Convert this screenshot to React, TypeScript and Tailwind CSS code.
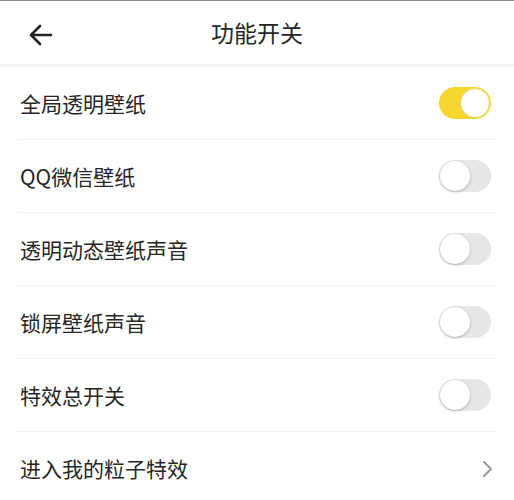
import React, { useState } from 'react';

const font = { fontFamily: '"Noto Sans CJK SC", "Noto Sans", sans-serif' };

const Toggle = ({ on, onChange }: { on: boolean; onChange: () => void }) => (
    <button
        onClick={onChange}
        className={`relative w-[52px] h-[32px] rounded-full ${on ? 'bg-[#f8d630]' : 'bg-[#e6e6e6]'}`}
    >
        <span
            className={`absolute top-[1px] w-[30px] h-[30px] rounded-full bg-white ${on ? 'right-[1px] border border-[#ecd66a]' : 'left-[1px] shadow-[0_1px_3px_rgba(0,0,0,0.25)]'}`}
        />
    </button>
);

export default function App() {
    const [items, setItems] = useState([
        { label: '全局透明壁纸', on: true },
        { label: 'QQ微信壁纸', on: false },
        { label: '透明动态壁纸声音', on: false },
        { label: '锁屏壁纸声音', on: false },
        { label: '特效总开关', on: false },
    ]);

    const toggle = (i: number) =>
        setItems(items.map((it, j) => (j === i ? { ...it, on: !it.on } : it)));

    return (
        <div className="w-[514px] h-[500px] bg-white overflow-hidden text-[#262626]" style={font}>
            <div className="h-[1px] bg-[#8a8a8a]" />
            <div className="relative h-[66px] flex items-center justify-center border-b-[3px] border-[#f4f4f4]">
                <svg className="absolute left-[28px] top-[22px]" width="26" height="24" viewBox="0 0 26 24" fill="none" stroke="#222" strokeWidth="2.6" strokeLinecap="round" strokeLinejoin="round">
                    <path d="M23 12H4M12 3l-9 9 9 9" />
                </svg>
                <span className="text-[23px] leading-none">功能开关</span>
            </div>
            <div className="px-[18px]">
                {items.map((it, i) => (
                    <div key={i} className="h-[73px] flex items-center justify-between border-b border-[#f2f2f2] pl-[2px] pr-[5px]">
                        <span className="text-[21px] leading-none">{it.label}</span>
                        <Toggle on={it.on} onChange={() => toggle(i)} />
                    </div>
                ))}
                <div className="h-[73px] flex items-center justify-between pl-[2px] pr-[5px]">
                    <span className="text-[21px] leading-none">进入我的粒子特效</span>
                    <svg width="12" height="18" viewBox="0 0 12 18" fill="none" stroke="#999" strokeWidth="2" strokeLinecap="round" strokeLinejoin="round" className="mr-[-3px]">
                        <path d="M2 2l7 7-7 7" />
                    </svg>
                </div>
            </div>
        </div>
    );
}
